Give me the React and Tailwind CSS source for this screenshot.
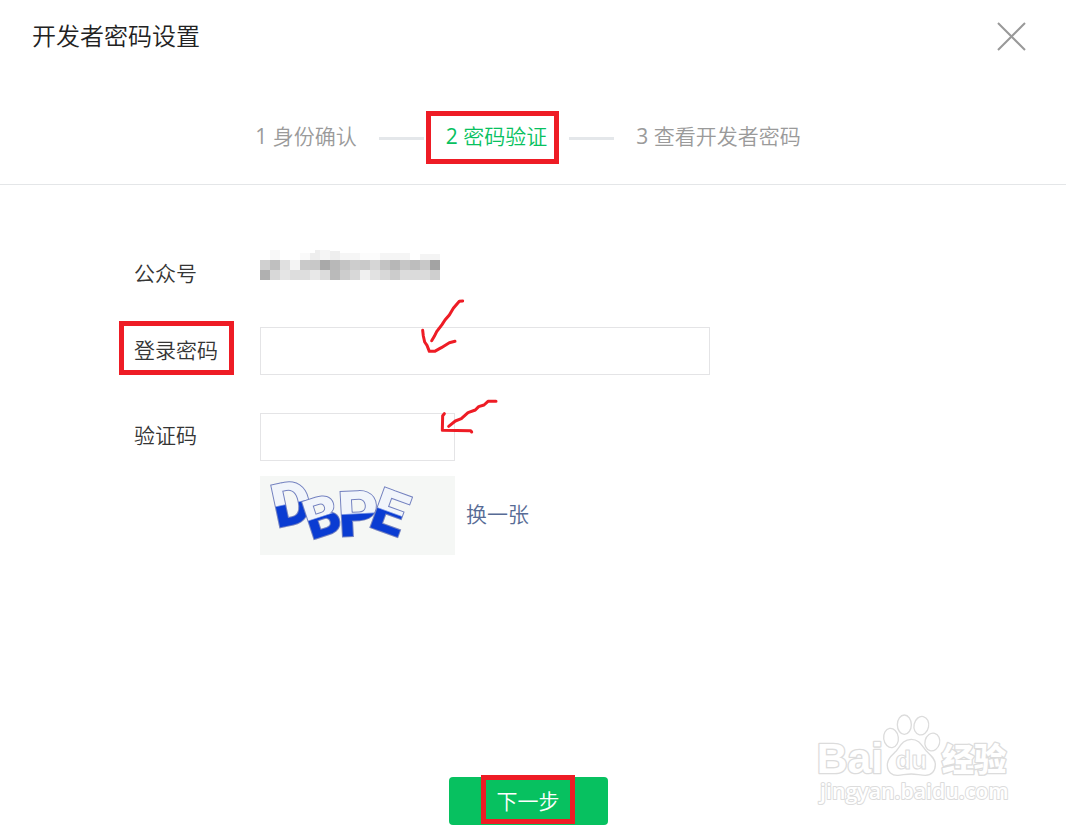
import React, { useState } from "react";

// ===== Blurred account name, one shade per 10px cell =====
const MOSAIC_ROWS = [
  ["#d0d0d0", "#bfbfbf", "#e0e0e0", "#f4f4f4", "#c9c9c9", "#c8c8c8", "#a9a9a9", "#b8b8b8", "#c4c4c4", "#cdcdcd", "#c9c9c9", "#d6d6d6", "#c3c3c3", "#b7b7b7", "#c6c6c6", "#bdbdbd", "#c8c8c8", "#a3a3a3"],
  ["#b0b0b0", "#d8d8d8", "#e5e5e5", "#dddddd", "#dedede", "#e8e8e8", "#dcdcdc", "#bababa", "#cdcdcd", "#d8d8d8", "#f0f0f0", "#e2e2e2", "#d8d8d8", "#cccccc", "#dcdcdc", "#dbdbdb", "#dbdbdb", "#cfcfcf"],
];

const MOSAIC_TOP = [
  { x: 10, y: 0, w: 10, fill: "#f8f8f8" },
  { x: 40, y: 3, w: 10, fill: "#fafafa" },
  { x: 50, y: 3, w: 10, fill: "#eeeeee" },
  { x: 55, y: 0, w: 5, fill: "#eeeeee" },
  { x: 60, y: 0, w: 10, fill: "#f5f5f5" },
  { x: 70, y: 1, w: 10, fill: "#eeeeee" },
  { x: 80, y: 3, w: 20, fill: "#f6f6f6" },
  { x: 100, y: 3, w: 20, fill: "#fcfcfc" },
  { x: 120, y: 3, w: 30, fill: "#f5f5f5" },
  { x: 160, y: 4, w: 20, fill: "#f4f4f4" },
];

function MaskedName() {
  return (
    <svg className="block self-start" width="180" height="30" viewBox="0 0 180 30" shapeRendering="crispEdges" aria-hidden="true">
      {MOSAIC_TOP.map((c, i) => (
        <rect key={i} x={c.x} y={c.y} width={c.w} height={10 - c.y} fill={c.fill} />
      ))}
      {MOSAIC_ROWS.map((row, r) =>
        row.map((fill, i) => (
          <rect key={`${r}-${i}`} x={i * 10} y={10 + r * 10} width="10" height="10" fill={fill} />
        ))
      )}
    </svg>
  );
}

// ===== Captcha =====
const CAPTCHA = [
  { char: "D", x: 50, y: 156, rotate: -12, size: 180 },
  { char: "B", x: 154, y: 192, rotate: -18, size: 164 },
  { char: "P", x: 238, y: 182, rotate: -3, size: 188 },
  { char: "E", x: 322, y: 150, rotate: 20, size: 178 },
];

function Captcha() {
  return (
    <svg className="block overflow-visible bg-[#f5f7f5]" width="195" height="79" viewBox="0 0 585 237" aria-hidden="true">
      <defs>
        {CAPTCHA.map((c, i) => (
          <linearGradient
            key={i}
            id={`ink-${i}`}
            gradientUnits="userSpaceOnUse"
            x1="0"
            y1={-c.size * 0.7}
            x2="0"
            y2="0"
          >
            <stop offset="0.48" stopColor="#f1f5fb" />
            <stop offset="0.52" stopColor="#0a3cd2" />
          </linearGradient>
        ))}
      </defs>
      {CAPTCHA.map((c, i) => (
        <text
          key={i}
          transform={`translate(${c.x} ${c.y}) rotate(${c.rotate})`}
          fontSize={c.size}
          fill={`url(#ink-${i})`}
          stroke="#7482c0"
          strokeWidth="6"
          paintOrder="stroke"
          className="font-extrabold [font-family:Roboto,sans-serif]"
        >
          {c.char}
        </text>
      ))}
    </svg>
  );
}

// ===== Site watermark =====
function Watermark() {
  return (
    <svg
      className="pointer-events-none absolute right-9 bottom-[9px]"
      width="230"
      height="120"
      viewBox="0 0 690 360"
      fill="#ffffff"
      stroke="#dcdcdc"
      strokeWidth="4"
      strokeLinejoin="round"
    >
      <g paintOrder="stroke" strokeWidth="8">
        <text x="50" y="220" fontSize="128" className="font-bold [font-family:'Liberation_Sans',sans-serif]">
          Bai
        </text>
        <text x="425" y="212" fontSize="97" className="font-black [font-family:'Noto_Sans_CJK_SC',sans-serif]">
          经验
        </text>
        <text x="60" y="298" fontSize="64" strokeWidth="6" className="font-semibold [font-family:'Open_Sans',sans-serif]">
          jingyan.baidu.com
        </text>
      </g>
      <ellipse cx="313" cy="74" rx="21" ry="29" />
      <ellipse cx="364" cy="77" rx="22" ry="28" transform="rotate(12 364 77)" />
      <ellipse cx="273" cy="114" rx="22" ry="29" transform="rotate(-8 273 114)" />
      <ellipse cx="397" cy="126" rx="22" ry="27" transform="rotate(15 397 126)" />
      <path d="M334 118c-26 0-34 22-46 36c-14 14-26 22-26 42c0 20 14 31 32 30c14-1 26-4 40-4s28 4 42 4c18 0 30-12 30-32c0-18-14-28-27-41c-13-14-20-35-45-35z" />
      <text x="286" y="208" fontSize="78" strokeWidth="3" className="font-bold [font-family:'Liberation_Sans',sans-serif]">
        du
      </text>
    </svg>
  );
}

// ===== Red marks =====
function Frame({ className }) {
  return <span className={`pointer-events-none absolute border-[5px] border-[#ee1c25] ${className}`} />;
}

function Arrow({ className, viewBox, width, height, shaft, head }) {
  return (
    <svg
      className={`pointer-events-none absolute ${className}`}
      width={width}
      height={height}
      viewBox={viewBox}
      fill="none"
      stroke="#ee1c25"
      strokeWidth="9"
      strokeLinecap="round"
      strokeLinejoin="round"
      aria-hidden="true"
    >
      <polyline points={shaft} />
      <polyline points={head} />
    </svg>
  );
}

const STEPS = ["1 身份确认", "2 密码验证", "3 查看开发者密码"];

export default function App() {
  const [password, setPassword] = useState("");
  const [code, setCode] = useState("");
  const current = 1;

  return (
    <div className="relative flex min-h-screen flex-col bg-white text-[21px] leading-8 text-[#353535] [font-family:'Open_Sans','Noto_Sans_CJK_SC_DemiLight','Noto_Sans_CJK_SC',sans-serif]">
      {/* ===== HEADER ===== */}
      <header className="flex items-center justify-between pt-5 pr-10 pl-8">
        <h1 className="text-2xl text-[#222222]">开发者密码设置</h1>
        <button type="button" aria-label="关闭" className="text-[#999999]">
          <svg width="29" height="29" viewBox="0 0 29 29" stroke="currentColor" strokeWidth="2" aria-hidden="true">
            <path d="M1 1l27 27M28 1L1 28" />
          </svg>
        </button>
      </header>

      {/* ===== STEPS ===== */}
      <ol className="flex items-center justify-center gap-[22px] border-b border-[#e4e6e8] pt-[68px] pr-[10px] pb-8">
        {STEPS.map((step, i) => (
          <React.Fragment key={step}>
            {i > 0 && <li aria-hidden="true" className="mt-1 h-[3px] w-[45px] bg-[#e4e7ea]" />}
            <li className={i === current ? "relative text-[#07c160]" : "text-[#9a9a9a]"}>
              {step}
              {i === current && <Frame className="-top-[9px] -right-3 -bottom-3 -left-5" />}
            </li>
          </React.Fragment>
        ))}
      </ol>

      {/* ===== FORM ===== */}
      <form className="grid grid-cols-[126px_1fr] items-center pt-[65px] pr-8 pl-[134px]">
        <span className="pt-[7px]">公众号</span>
        <MaskedName />

        <label htmlFor="password" className="relative mt-[38px] justify-self-start pb-[2px]">
          登录密码
          <Frame className="-top-[13px] -right-4 -bottom-[7px] -left-[15px]" />
        </label>
        <div className="relative mt-[38px]">
          <input
            id="password"
            type="password"
            value={password}
            onChange={(e) => setPassword(e.target.value)}
            className="block h-12 w-[450px] max-w-full border border-[#e4e4e6] px-3 outline-none"
          />
          <Arrow
            className="-top-8 left-[155px]"
            width="50"
            height="60"
            viewBox="45 15 150 180"
            shaft="188,33 178,34 160,55 148,75 135,90 126,104 110,125 103,139 95,152"
            head="68,121 70,138 74,156 81,166 88,184 104,184 124,173 148,158 165,154"
          />
        </div>

        <label htmlFor="code" className="mt-[38px] pb-1">
          验证码
        </label>
        <div className="relative mt-[38px]">
          <input
            id="code"
            type="text"
            value={code}
            onChange={(e) => setCode(e.target.value)}
            className="block h-12 w-[195px] border border-[#e4e4e6] px-3 outline-none"
          />
          <Arrow
            className="-top-[18px] left-[178px]"
            width="60"
            height="40"
            viewBox="114 315 180 120"
            shaft="288,334 264,334 252,345 236,350 226,360 204,368 184,386 166,393 146,409"
            head="133,371 128,377 127,421 212,422 215,426"
          />
        </div>

        <div className="col-start-2 mt-[15px] flex items-center gap-[11px]">
          <Captcha />
          <a href="#captcha" className="pb-1 text-[#576b95]">
            换一张
          </a>
        </div>
      </form>

      {/* ===== FOOTER ===== */}
      <footer className="mt-auto flex justify-center pt-8 pr-[10px] pb-1">
        <button type="button" className="flex h-12 w-[159px] items-center justify-center rounded bg-[#07c160] text-white">
          <span className="relative">
            下一步
            <Frame className="-top-[10px] -right-[15px] -bottom-[7px] -left-4" />
          </span>
        </button>
      </footer>

      <Watermark />
    </div>
  );
}
